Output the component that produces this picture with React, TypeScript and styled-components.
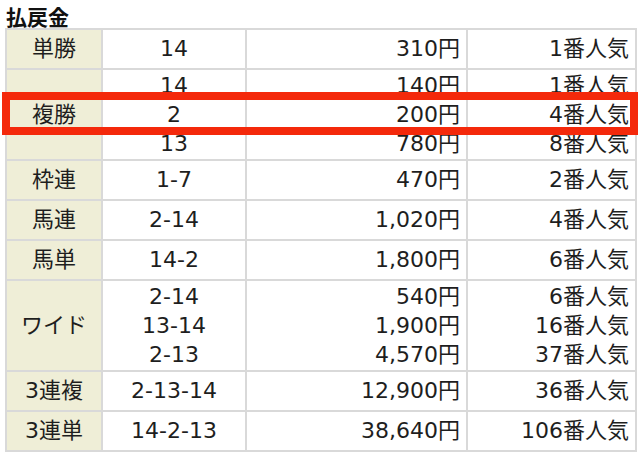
import React from 'react'
import styled, { createGlobalStyle } from 'styled-components'

const GlobalStyle = createGlobalStyle`
    body {
        margin: 0;
        background: #ffffff;
        font-family: 'DejaVu Sans', 'Noto Sans CJK JP', sans-serif;
        color: #1e1e1e;
    }
`

const Page = styled.div`
    width: 640px;
    height: 457px;
    padding: 0 5px;
    box-sizing: border-box;
`

const Title = styled.h2`
    margin: 4px 0 0 1px;
    font-family: 'Noto Sans CJK JP', sans-serif;
    font-size: 21px;
    line-height: 24px;
    font-weight: 700;
    color: #111;
`

const TableWrap = styled.div`
    position: relative;
`

const PayoutTable = styled.table`
    width: 630px;
    table-layout: fixed;
    border-collapse: separate;
    border-spacing: 0;
    border-top: 2px solid #d9d9d9;
    border-left: 2px solid #d9d9d9;
    font-size: 22px;
`

const Cell = styled.td<{ $align: 'center' | 'right'; $label?: boolean; $lines?: number }>`
    padding: ${(p) => (p.$lines ? '1px' : '0')} 6px;
    line-height: ${(p) => (p.$lines ? '29px' : '38px')};
    text-align: ${(p) => p.$align};
    background: ${(p) => (p.$label ? '#efeed7' : '#ffffff')};
    border-right: 2px solid #d9d9d9;
    border-bottom: 2px solid #d9d9d9;
    white-space: nowrap;
    vertical-align: middle;
`

const Line = styled.div``

const Highlight = styled.div`
    position: absolute;
    top: 64px;
    left: -3px;
    width: 636px;
    height: 43px;
    box-sizing: border-box;
    border: 8px solid #f4290b;
    pointer-events: none;
`

type Payout = {
    kind: string
    combos: string[]
    amounts: string[]
    ranks: string[]
}

const payouts: Payout[] = [
    { kind: '単勝', combos: ['14'], amounts: ['310円'], ranks: ['1番人気'] },
    {
        kind: '複勝',
        combos: ['14', '2', '13'],
        amounts: ['140円', '200円', '780円'],
        ranks: ['1番人気', '4番人気', '8番人気'],
    },
    { kind: '枠連', combos: ['1-7'], amounts: ['470円'], ranks: ['2番人気'] },
    { kind: '馬連', combos: ['2-14'], amounts: ['1,020円'], ranks: ['4番人気'] },
    { kind: '馬単', combos: ['14-2'], amounts: ['1,800円'], ranks: ['6番人気'] },
    {
        kind: 'ワイド',
        combos: ['2-14', '13-14', '2-13'],
        amounts: ['540円', '1,900円', '4,570円'],
        ranks: ['6番人気', '16番人気', '37番人気'],
    },
    { kind: '3連複', combos: ['2-13-14'], amounts: ['12,900円'], ranks: ['36番人気'] },
    { kind: '3連単', combos: ['14-2-13'], amounts: ['38,640円'], ranks: ['106番人気'] },
]

function Lines({ items }: { items: string[] }) {
    return (
        <>
            {items.map((item, i) => (
                <Line key={i}>{item}</Line>
            ))}
        </>
    )
}

export default function App() {
    return (
        <Page>
            <GlobalStyle />
            <Title>払戻金</Title>
            <TableWrap>
                <PayoutTable>
                    <colgroup>
                        <col style={{ width: 96 }} />
                        <col style={{ width: 144 }} />
                        <col style={{ width: 221 }} />
                        <col style={{ width: 169 }} />
                    </colgroup>
                    <tbody>
                        {payouts.map((p) => {
                            const lines = p.combos.length > 1 ? p.combos.length : undefined
                            return (
                                <tr key={p.kind}>
                                    <Cell $align="center" $label $lines={lines}>
                                        {p.kind}
                                    </Cell>
                                    <Cell $align="center" $lines={lines}>
                                        <Lines items={p.combos} />
                                    </Cell>
                                    <Cell $align="right" $lines={lines}>
                                        <Lines items={p.amounts} />
                                    </Cell>
                                    <Cell $align="right" $lines={lines}>
                                        <Lines items={p.ranks} />
                                    </Cell>
                                </tr>
                            )
                        })}
                    </tbody>
                </PayoutTable>
                <Highlight />
            </TableWrap>
        </Page>
    )
}
